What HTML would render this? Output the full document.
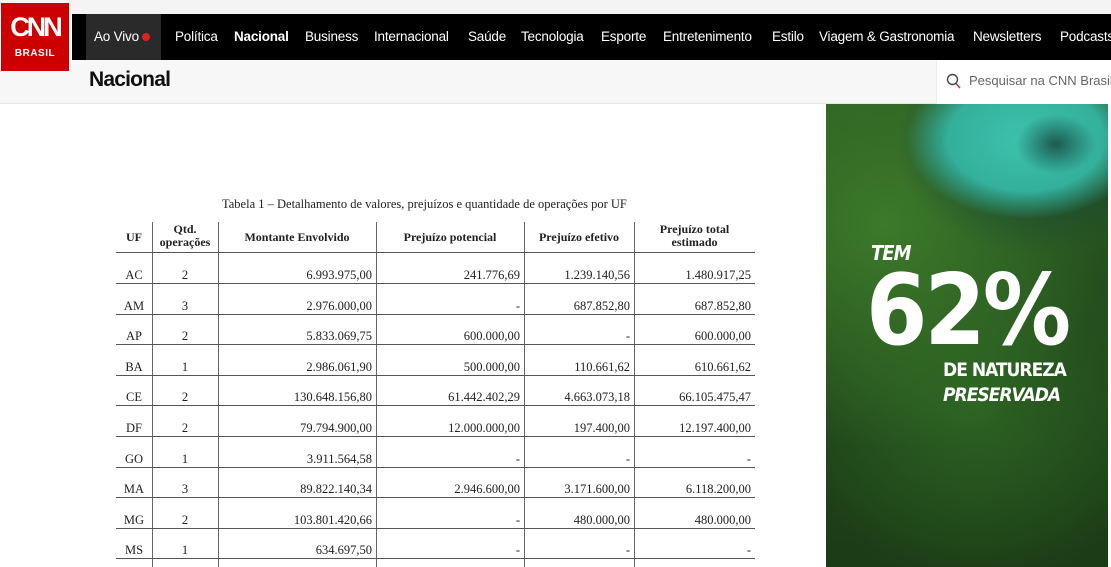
<!DOCTYPE html>
<html><head><meta charset="utf-8"><style>
*{margin:0;padding:0;box-sizing:border-box}
body{width:1111px;height:567px;overflow:hidden;background:#fff;font-family:"Liberation Sans",sans-serif;position:relative}
.top{position:absolute;left:0;top:0;width:1111px;height:14px;background:#f4f4f4}
.nav{position:absolute;left:72px;top:14px;width:1039px;height:46px;background:#000;color:#fff;font-size:13.5px;white-space:nowrap;letter-spacing:-.2px}
.nav span{position:absolute;top:15px}
.live{position:absolute;left:14px;top:0;width:75px;height:46px;background:#2a2a2a}
.logo{position:absolute;left:1px;top:3px;width:68px;height:68px;background:#cc0000;color:#fff;text-align:center;z-index:5}
.sub{position:absolute;left:0;top:60px;width:1111px;height:44px;background:#f7f7f7;border-bottom:1px solid #e6e6e6}
.search{position:absolute;left:936px;top:60px;width:175px;height:44px;background:#fff;border-left:1px solid #eee;color:#666;font-size:13px}
.v{position:absolute;top:222px;width:1px;height:345px;background:#666}
.h{position:absolute;left:116px;width:639px;height:1px;background:#555}
.c{position:absolute;font-family:"Liberation Serif",serif;font-size:12.5px;color:#222;white-space:nowrap}
.hd{font-weight:bold;font-size:12px;text-align:center;line-height:13px}
.ad{position:absolute;left:826px;top:104px;width:282px;height:463px;overflow:hidden;
background:
radial-gradient(ellipse 40px 30px at 230px 40px,#1c5a50 0%,rgba(0,0,0,0) 100%),
radial-gradient(ellipse 120px 80px at 200px 35px,#3cc2ae 0%,#34b09c 65%,rgba(20,60,50,0) 100%),
radial-gradient(ellipse 140px 110px at 210px 40px,#13403a 0%,rgba(0,0,0,0) 100%),
radial-gradient(circle at 60px 120px,#3c7a2a 0%,rgba(0,0,0,0) 55%),
radial-gradient(circle at 150px 300px,#2c6322 0%,rgba(0,0,0,0) 55%),
linear-gradient(180deg,#2a5c22 0%,#22491c 50%,#1b3b16 100%)}
.ad div{position:absolute;color:#fff;font-weight:bold;font-family:"DejaVu Sans Condensed","Liberation Sans",sans-serif}
</style></head><body>
<div class="top"></div>
<div class="logo"><div style="font-size:27px;font-weight:bold;letter-spacing:-3px;margin-top:9px;font-family:'Liberation Sans';line-height:30px">CNN</div><div style="font-size:10px;font-weight:bold;letter-spacing:.5px;margin-top:6px">BRASIL</div></div>
<div class="nav">
<div class="live"></div>
<span style="left:22px">Ao Vivo <b style="display:inline-block;width:8px;height:8px;border-radius:50%;background:#d22;vertical-align:0"></b></span>
<span style="left:103px">Política</span>
<span style="left:162px;font-weight:bold">Nacional</span>
<span style="left:233px">Business</span>
<span style="left:302px">Internacional</span>
<span style="left:396px">Saúde</span>
<span style="left:449px">Tecnologia</span>
<span style="left:529px">Esporte</span>
<span style="left:591px">Entretenimento</span>
<span style="left:700px">Estilo</span>
<span style="left:747px">Viagem &amp; Gastronomia</span>
<span style="left:901px">Newsletters</span>
<span style="left:988px">Podcasts</span>
</div>
<div class="sub"><div style="position:absolute;left:89px;top:8px;font-size:21px;font-weight:bold;letter-spacing:-.8px;color:#111">Nacional</div></div>
<div class="search"><svg style="position:absolute;left:9px;top:13px" width="16" height="17" viewBox="0 0 16 17"><circle cx="6.5" cy="6.5" r="5" fill="none" stroke="#444" stroke-width="1.4"/><line x1="10" y1="10.5" x2="14" y2="15" stroke="#c33" stroke-width="1.5"/></svg><span style="position:absolute;left:32px;top:13px;white-space:nowrap">Pesquisar na CNN Brasil</span></div>

<div class="c" style="left:222px;top:197px;font-size:12.5px">Tabela 1 – Detalhamento de valores, prejuízos e quantidade de operações por UF</div>
<div class="v" style="left:152px"></div><div class="v" style="left:218px"></div><div class="v" style="left:376px"></div><div class="v" style="left:524px"></div><div class="v" style="left:634px"></div>
<div class="h" style="top:252px"></div>
<div class="c hd" style="left:116px;width:36px;top:231px">UF</div>
<div class="c hd" style="left:152px;width:66px;top:223px">Qtd.<br>operações</div>
<div class="c hd" style="left:218px;width:158px;top:231px">Montante Envolvido</div>
<div class="c hd" style="left:376px;width:148px;top:231px">Prejuízo potencial</div>
<div class="c hd" style="left:524px;width:110px;top:231px">Prejuízo efetivo</div>
<div class="c hd" style="left:634px;width:121px;top:223px">Prejuízo total<br>estimado</div>
<div id="rows"></div>
<script>
var d=[["AC","2","6.993.975,00","241.776,69","1.239.140,56","1.480.917,25"],["AM","3","2.976.000,00","-","687.852,80","687.852,80"],["AP","2","5.833.069,75","600.000,00","-","600.000,00"],["BA","1","2.986.061,90","500.000,00","110.661,62","610.661,62"],["CE","2","130.648.156,80","61.442.402,29","4.663.073,18","66.105.475,47"],["DF","2","79.794.900,00","12.000.000,00","197.400,00","12.197.400,00"],["GO","1","3.911.564,58","-","-","-"],["MA","3","89.822.140,34","2.946.600,00","3.171.600,00","6.118.200,00"],["MG","2","103.801.420,66","-","480.000,00","480.000,00"],["MS","1","634.697,50","-","-","-"]];
var ed=[116,152,218,376,524,634,755],h="";
d.forEach(function(r,i){var y=268+i*30.6;
h+='<div class="h" style="top:'+Math.round(y+15)+'px"></div>';
r.forEach(function(t,j){var l=ed[j],w=ed[j+1]-l;var al=j<2?'center':'right';
h+='<div class="c" style="left:'+l+'px;width:'+w+'px;top:'+y+'px;text-align:'+al+';padding-right:'+(j<2?0:4)+'px">'+t+'</div>';});});
document.getElementById('rows').innerHTML=h;
</script>
<div class="ad">
<div style="left:45px;top:137px;font-size:20px;font-style:italic;letter-spacing:-1px">TEM</div>
<div style="left:40px;top:152px;font-size:98px;letter-spacing:-3px;line-height:110px">62%</div>
<div style="left:117px;top:255px;font-size:19px;letter-spacing:-1px">DE NATUREZA</div>
<div style="left:117px;top:280px;font-size:19px;font-style:italic;letter-spacing:-1px">PRESERVADA</div>
</div>
</body></html>
